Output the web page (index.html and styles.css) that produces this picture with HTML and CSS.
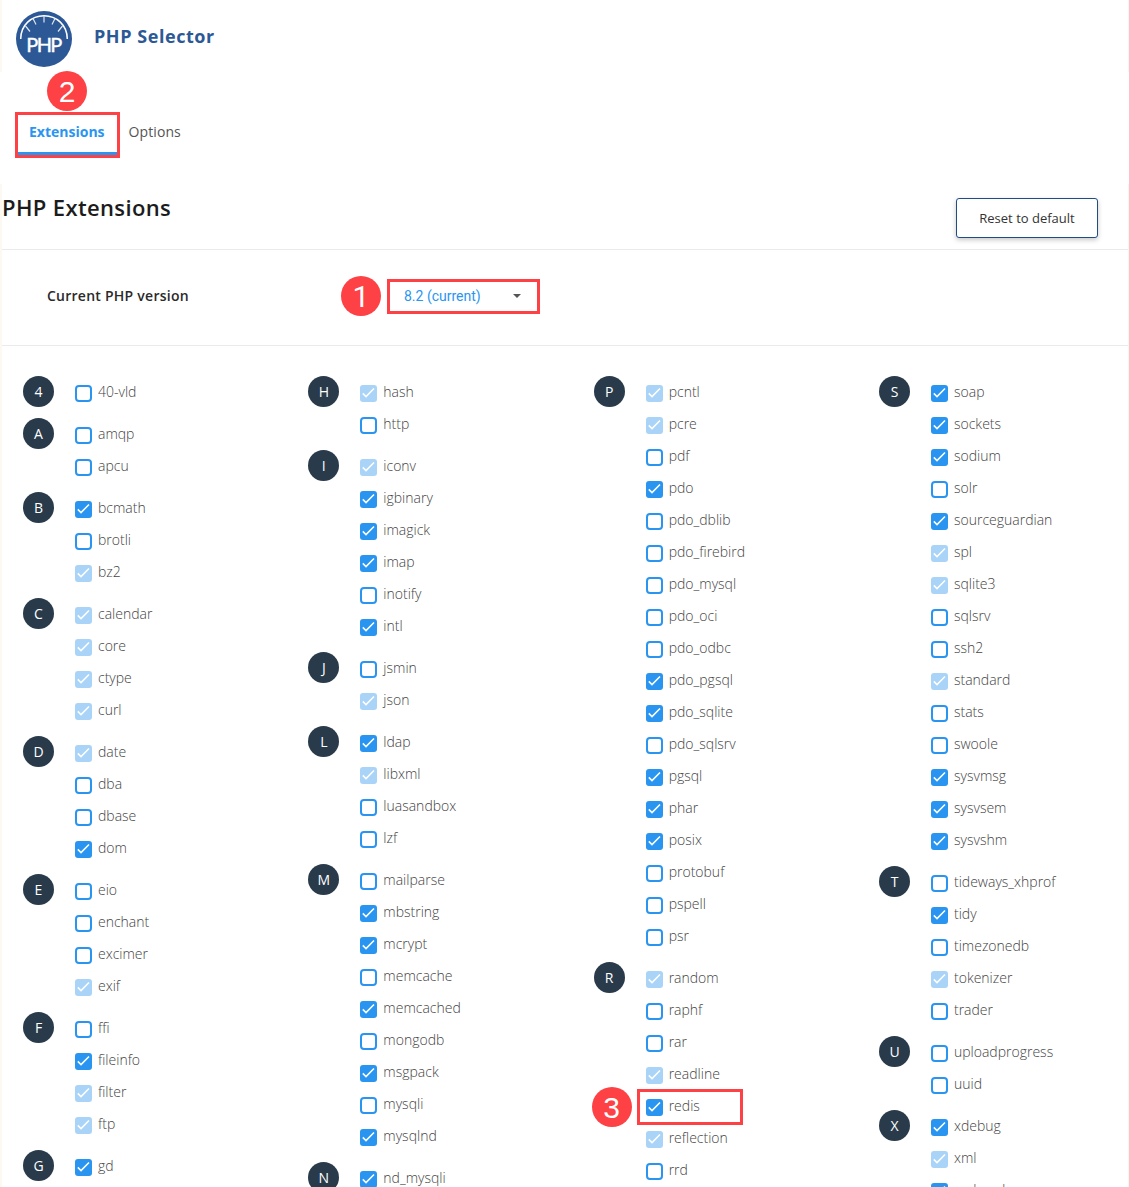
FILE: index.html
```html
<!DOCTYPE html>
<html lang="en">
<head>
<meta charset="utf-8">
<title>PHP Selector</title>
<link rel="stylesheet" href="styles.css">
</head>
<body>
<header class="app-header">
  <svg class="logo" viewBox="0 0 56 56" aria-hidden="true">
    <circle cx="28" cy="28" r="28" fill="#2c5896"/>
    <path d="M4.700 28C4.700 14 15.500 4.700 28 4.700S51.300 14 51.300 28" fill="none" stroke="#fff" stroke-width="1.500"/>
    <path d="M28 5v6.500M17 7.500l3 6M39 7.500l-3 6M9.500 15l4.500 5.500M46.500 15l-4.500 5.500" fill="none" stroke="#dce5f1" stroke-width="1.200"/>
    <text x="28.300" y="41" text-anchor="middle" class="logo-text" textLength="36">PHP</text>
  </svg>
  <h1>PHP Selector</h1>
</header>
<nav class="tabs">
  <a class="tab active">Extensions<span class="badge badge-top">2</span></a>
  <a class="tab">Options</a>
</nav>
<main class="panel">
  <div class="title-row"><h2>PHP Extensions</h2><button class="reset">Reset to default</button></div>
  <div class="version-row">
    <span class="version-label">Current PHP version</span>
    <span class="badge badge-version">1</span>
    <div class="select"><span>8.2 (current)</span><i class="caret"></i></div>
  </div>
  <div class="columns">
    <div class="column">
      <section><b>4</b><ul><li>40-vld</li></ul></section>
      <section><b>A</b><ul><li>amqp</li><li>apcu</li></ul></section>
      <section><b>B</b><ul><li class="on">bcmath</li><li>brotli</li><li class="fixed">bz2</li></ul></section>
      <section><b>C</b><ul><li class="fixed">calendar</li><li class="fixed">core</li><li class="fixed">ctype</li><li class="fixed">curl</li></ul></section>
      <section><b>D</b><ul><li class="fixed">date</li><li>dba</li><li>dbase</li><li class="on">dom</li></ul></section>
      <section><b>E</b><ul><li>eio</li><li>enchant</li><li>excimer</li><li class="fixed">exif</li></ul></section>
      <section><b>F</b><ul><li>ffi</li><li class="on">fileinfo</li><li class="fixed">filter</li><li class="fixed">ftp</li></ul></section>
      <section><b>G</b><ul><li class="on">gd</li></ul></section>
    </div>
    <div class="column">
      <section><b>H</b><ul><li class="fixed">hash</li><li>http</li></ul></section>
      <section><b>I</b><ul><li class="fixed">iconv</li><li class="on">igbinary</li><li class="on">imagick</li><li class="on">imap</li><li>inotify</li><li class="on">intl</li></ul></section>
      <section><b>J</b><ul><li>jsmin</li><li class="fixed">json</li></ul></section>
      <section><b>L</b><ul><li class="on">ldap</li><li class="fixed">libxml</li><li>luasandbox</li><li>lzf</li></ul></section>
      <section><b>M</b><ul><li>mailparse</li><li class="on">mbstring</li><li class="on">mcrypt</li><li>memcache</li><li class="on">memcached</li><li>mongodb</li><li class="on">msgpack</li><li>mysqli</li><li class="on">mysqlnd</li></ul></section>
      <section><b>N</b><ul><li class="on">nd_mysqli</li></ul></section>
    </div>
    <div class="column">
      <section><b>P</b><ul><li class="fixed">pcntl</li><li class="fixed">pcre</li><li>pdf</li><li class="on">pdo</li><li>pdo_dblib</li><li>pdo_firebird</li><li>pdo_mysql</li><li>pdo_oci</li><li>pdo_odbc</li><li class="on">pdo_pgsql</li><li class="on">pdo_sqlite</li><li>pdo_sqlsrv</li><li class="on">pgsql</li><li class="on">phar</li><li class="on">posix</li><li>protobuf</li><li>pspell</li><li>psr</li></ul></section>
      <section><b>R</b><ul><li class="fixed">random</li><li>raphf</li><li>rar</li><li class="fixed">readline</li><li class="on marked">redis<span class="badge badge-row">3</span></li><li class="fixed">reflection</li><li>rrd</li></ul></section>
    </div>
    <div class="column">
      <section><b>S</b><ul><li class="on">soap</li><li class="on">sockets</li><li class="on">sodium</li><li>solr</li><li class="on">sourceguardian</li><li class="fixed">spl</li><li class="fixed">sqlite3</li><li>sqlsrv</li><li>ssh2</li><li class="fixed">standard</li><li>stats</li><li>swoole</li><li class="on">sysvmsg</li><li class="on">sysvsem</li><li class="on">sysvshm</li></ul></section>
      <section><b>T</b><ul><li>tideways_xhprof</li><li class="on">tidy</li><li>timezonedb</li><li class="fixed">tokenizer</li><li>trader</li></ul></section>
      <section><b>U</b><ul><li>uploadprogress</li><li>uuid</li></ul></section>
      <section><b>X</b><ul><li class="on">xdebug</li><li class="fixed">xml</li><li class="on">xmlreader</li></ul></section>
    </div>
  </div>
</main>
</body>
</html>
```
FILE: styles.css
```css
*, *::before, *::after { box-sizing: border-box; }
body {
  margin: 0;
  height: 1187px;
  overflow: hidden;
  display: flex;
  flex-direction: column;
  background: #fff;
  color: #333;
  font-family: "Open Sans", sans-serif;
}
h1, h2, ul { margin: 0; padding: 0; }

.app-header {
  display: flex;
  flex: none;
  gap: 22px;
  height: 72px;
  padding: 11px 0 0 14px;
  border-left: 2px solid #fcf8f2;
  border-right: 1px solid #f6f6f4;
}
.logo { width: 56px; height: 56px; }
.logo-text { font: 20px Lato, sans-serif; fill: #fff; stroke: #fff; stroke-width: .4px; }
h1 { font-size: 18px; line-height: 50px; font-weight: 700; color: #2c5896; letter-spacing: .55px; }

.tabs { display: flex; flex: none; height: 112px; padding: 40px 0 0 15px; }
.tab { height: 46px; font-size: 14px; line-height: 40px; color: #555; letter-spacing: .1px; padding-left: 8.500px; }
.tab.active {
  position: relative;
  width: 105px;
  padding-left: 11px;
  line-height: 34px;
  border: 3px solid #fd4144;
  box-shadow: inset 0 -3px #2a95f0;
  color: #2a95f0;
  font-weight: 700;
  letter-spacing: 0;
}
.badge {
  display: block;
  flex: none;
  width: 40px;
  height: 40px;
  border-radius: 50%;
  background: #fd4144;
  color: #fff;
  font: 30px/41px "Liberation Sans", sans-serif;
  letter-spacing: 0;
  text-align: center;
}
.badge-top { position: absolute; left: 29px; top: -44px; }
.badge-version { font-family: Roboto, sans-serif; }

.panel { flex: 1; min-height: 0; border-left: 2px solid #fcf8f2; border-right: 1px solid #f8f6ee; }
.title-row { display: flex; justify-content: space-between; height: 66px; padding-right: 30px; border-bottom: 1px solid #ebebeb; }
h2 { font-size: 22px; line-height: 47px; font-weight: 600; color: #1c1c1c; letter-spacing: .37px; }
.reset {
  width: 142px;
  height: 40px;
  margin-top: 14px;
  padding: 0;
  background: #fff;
  border: 1px solid #1f4e86;
  border-radius: 3px;
  box-shadow: 0 2px 5px rgba(0, 0, 0, .22);
  font: 13px "Open Sans", sans-serif;
  color: #333;
}
.version-row { display: flex; align-items: flex-start; height: 96px; padding: 26px 0 0 45px; border-bottom: 1px solid #ebebeb; }
.version-label { width: 294px; font-size: 14px; line-height: 40px; font-weight: 600; letter-spacing: .25px; color: #2a2a2a; }
.select {
  display: flex;
  align-items: center;
  justify-content: space-between;
  width: 153px;
  height: 35px;
  margin: 3px 0 0 6px;
  padding: 0 16px 1px 14px;
  border: 3px solid #fd4144;
  font: 14px Roboto, sans-serif;
  color: #2a95f0;
}
.caret { border: 4px solid transparent; border-top-color: #555; border-bottom: 0; }

.columns { display: grid; grid-template-columns: repeat(4, 285.33px); padding: 30px 0 0 21px; }
section { display: flex; align-items: flex-start; margin-bottom: 10px; }
section b {
  width: 31px;
  height: 31px;
  margin-right: 21px;
  border-radius: 50%;
  background: #293a4b;
  color: #fff;
  font-size: 14px;
  font-weight: 400;
  line-height: 31px;
  text-align: center;
}
li {
  display: flex;
  position: relative;
  height: 32px;
  gap: 6px;
  font-size: 14px;
  font-weight: 300;
  line-height: 32px;
  color: #444;
}
li::before {
  content: "";
  width: 17px;
  height: 17px;
  margin-top: 9px;
  border: 2px solid #2a95f0;
  border-radius: 4px;
}
li.on::before, li.fixed::before {
  border: 0;
  border-radius: 3px;
  background: #2a95f0 url("data:image/svg+xml,%3Csvg xmlns='http://www.w3.org/2000/svg' viewBox='0 0 17 17'%3E%3Cpath d='M2.8 8.400 6 11.600 14 3.400' fill='none' stroke='white' stroke-width='1.500'/%3E%3C/svg%3E");
}
li.fixed::before { opacity: .4; }
li.marked::after { content: ""; position: absolute; left: -9px; top: -1px; width: 106px; height: 36px; border: 3px solid #fd4144; }
.badge-row { position: absolute; left: -54px; top: -3px; }
```
